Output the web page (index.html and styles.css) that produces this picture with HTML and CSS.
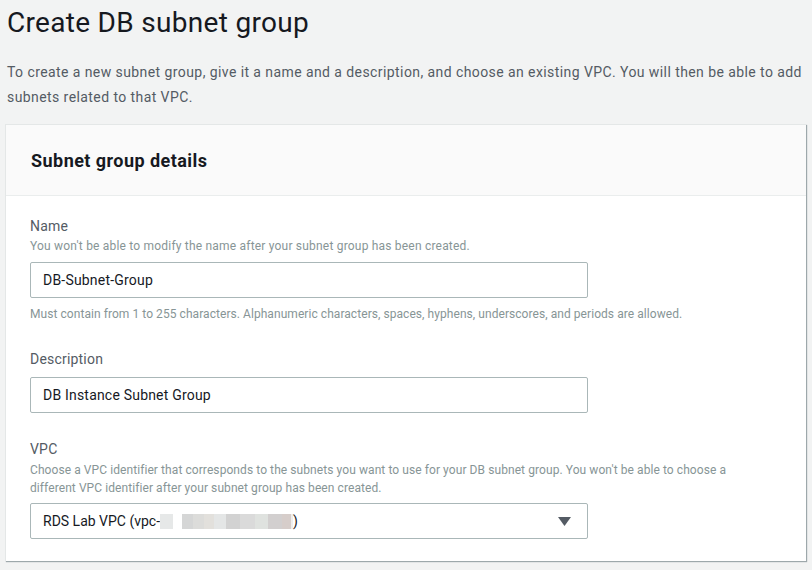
FILE: index.html
```html
<!DOCTYPE html>
<html>
<head>
<meta charset="utf-8">
<link rel="stylesheet" href="styles.css">
</head>
<body>
<div class="page">
  <h1 class="title">Create DB subnet group</h1>
  <p class="intro">To create a new subnet group, give it a name and a description, and choose an existing VPC. You will then be able to add subnets related to that VPC.</p>
  <section class="card">
    <div class="card-header">
      <h2>Subnet group details</h2>
    </div>
    <div class="card-body">
      <div class="field">
        <div class="label">Name</div>
        <div class="hint">You won't be able to modify the name after your subnet group has been created.</div>
        <div class="input">DB-Subnet-Group</div>
        <div class="constraint">Must contain from 1 to 255 characters. Alphanumeric characters, spaces, hyphens, underscores, and periods are allowed.</div>
      </div>
      <div class="field">
        <div class="label label-solo">Description</div>
        <div class="input">DB Instance Subnet Group</div>
      </div>
      <div class="field">
        <div class="label">VPC</div>
        <div class="hint hint-wrap">Choose a VPC identifier that corresponds to the subnets you want to use for your DB subnet group. You won't be able to choose a different VPC identifier after your subnet group has been created.</div>
        <div class="input select">
          <span class="sel-text">RDS Lab VPC (vpc-<span class="blur"></span>)</span>
          <svg class="caret" width="13" height="9" viewBox="0 0 13 9"><path d="M0 0 H13 L6.5 9 Z" fill="#545b64"/></svg>
        </div>
      </div>
    </div>
  </section>
</div>
</body>
</html>
```
FILE: styles.css
```css
* { box-sizing: border-box; }
html, body { margin: 0; padding: 0; }
body {
  background: #f2f3f3;
  font-family: Roboto, "Liberation Sans", sans-serif;
  color: #16191f;
  width: 812px;
  height: 570px;
  overflow: hidden;
}
.page { padding: 0 6px 0 5px; }
.title {
  margin: 0;
  padding: 5px 0 0 2px;
  font-size: 28px;
  font-weight: 400;
  line-height: 36px;
  color: #16191f;
  letter-spacing: 0.3px;
}
.intro {
  margin: 19px 0 0 2px;
  font-size: 14px;
  line-height: 25px;
  color: #545b64;
  width: 805px;
  letter-spacing: 0.42px;
}
.card {
  margin-top: 14px;
  background: #fff;
  border-top: 1px solid #e4e7e7;
  border-left: 1px solid #e4e7e7;
  box-shadow: 1px 1px 1px 0 rgba(0,28,36,0.35);
  width: 801px;
  height: 437px;
}
.card-header {
  background: #fafafa;
  border-bottom: 1px solid #eaeded;
  height: 71px;
  display: flex;
  align-items: center;
  padding-left: 25px;
}
.card-header h2 {
  margin: 0;
  font-size: 18px;
  font-weight: 700;
  color: #16191f;
  padding-top: 1px;
  letter-spacing: 0.45px;
}
.card-body { padding: 19px 0 0 24px; }
.field { margin-bottom: 25px; }
.label {
  font-size: 14px;
  line-height: 22px;
  color: #545b64;
  letter-spacing: 0.2px;
}
.label-solo { margin-bottom: 7px; }
.hint {
  font-size: 12px;
  line-height: 18px;
  color: #879596;
  margin-bottom: 7px;
  letter-spacing: 0.2px;
}
.hint-wrap { width: 720px; margin-top: 1px; margin-bottom: 6px; letter-spacing: 0.08px; }
.input {
  width: 558px;
  height: 36px;
  border: 1px solid #aab7b8;
  border-radius: 2px;
  background: #fff;
  padding: 0 12px;
  font-size: 14px;
  line-height: 34px;
  color: #16191f;
  display: flex;
  align-items: center;
  letter-spacing: 0.2px;
}
.select { letter-spacing: 0; }
.constraint {
  font-size: 12px;
  line-height: 18px;
  color: #879596;
  margin-top: 7px;
  white-space: nowrap;
  letter-spacing: 0.06px;
}
.select { justify-content: space-between; padding-right: 16px; }
.sel-text { display: flex; align-items: center; }
.blur {
  display: inline-block;
  width: 133px;
  height: 15px;
  margin-top: 1px;
  background:
    linear-gradient(90deg, #e6e8e8 0 13px, #fff 13px 22px, #d5d6d6 22px 33px, #dcdcda 33px 44px, #e2e0dc 44px 54px, #e4e6e6 54px 66px, #d2d2d2 66px 80px, #dadada 80px 95px, #dfe2df 95px 108px, #d2cfcf 108px 122px, #d6cdca 122px 131px, #eee 131px 133px);
}
.caret { display: block; }
```
